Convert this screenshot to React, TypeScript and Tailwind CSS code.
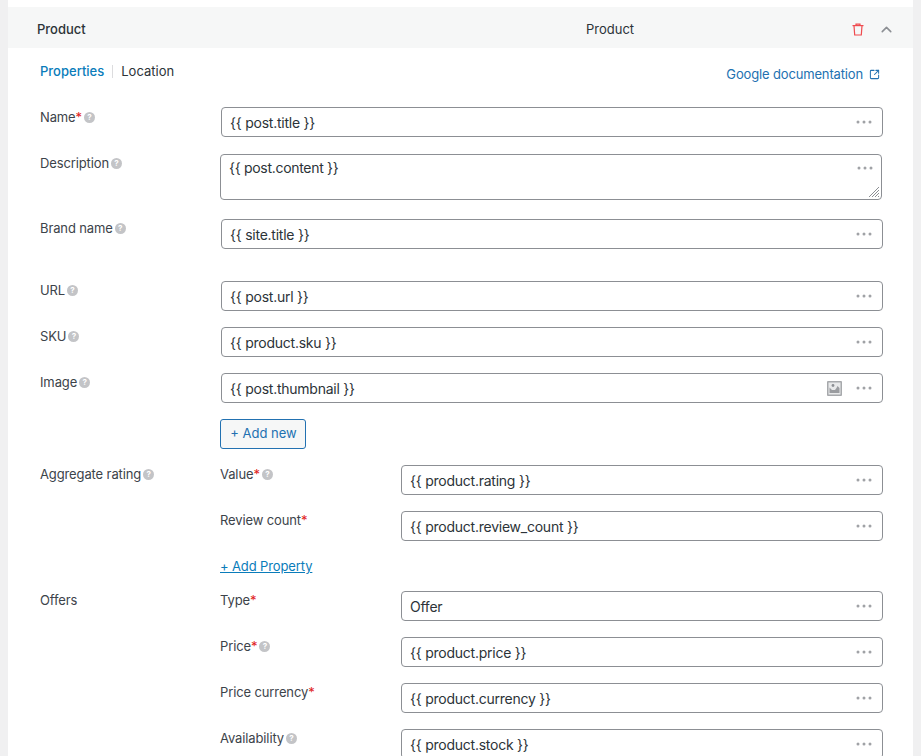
import { ChevronUp, SquareArrowOutUpRight } from 'lucide-react'

const fontStack = 'font-["Inter","Noto_Sans",sans-serif]'

function Help() {
  return (
    <span className="ml-[2px] inline-flex h-[11px] w-[11px] shrink-0 items-center justify-center rounded-full bg-[#c3c4c7] text-[8px] font-bold leading-none text-white">
      ?
    </span>
  )
}

function Label({ text, required, help }: { text: string; required?: boolean; help?: boolean }) {
  return (
    <div className="-mt-px flex items-center text-[13px] leading-[20px] tracking-[-0.12px] text-[#3c434a]">
      <span>{text}</span>
      {required && <span className="text-[#e02020]">*</span>}
      {help && <Help />}
    </div>
  )
}

function Dots() {
  return (
    <svg width="16" height="4" viewBox="0 0 16 4" className="shrink-0">
      <circle cx="2" cy="2" r="1.5" fill="#a0a2a6" />
      <circle cx="8" cy="2" r="1.5" fill="#a0a2a6" />
      <circle cx="14" cy="2" r="1.5" fill="#a0a2a6" />
    </svg>
  )
}

function ImageIcon() {
  return (
    <svg width="15" height="15" viewBox="0 0 15 15" className="mr-[14px] shrink-0">
      <rect width="15" height="15" rx="1" fill="#a7a9ac" />
      <rect x="1.5" y="1.5" width="12" height="12" fill="#e8e9ea" />
      <circle cx="6" cy="4.5" r="1.4" fill="#8c8f94" />
      <path d="M2.5 6.5l2.5 2.5h3l1.5-2 1-2 2 2v5h-10z" fill="#9a9ca0" />
    </svg>
  )
}

function TrashIcon() {
  return (
    <svg width="12" height="13" viewBox="0 0 12 13" fill="none" stroke="#ef4b4f" strokeWidth="1.2" className="shrink-0">
      <path d="M0.5 2.6h11" />
      <path d="M4 2.5V1.1h4v1.4" />
      <path d="M2 2.6l0.7 9.4h6.6L10 2.6" />
    </svg>
  )
}

function Field({ value, image }: { value: string; image?: boolean }) {
  return (
    <div className="ml-px flex h-[30px] items-center rounded-[4px] border border-[#8c8f94] bg-white pl-[8px] pr-[10px] text-[14px] tracking-[-0.24px] text-[#2c3338]">
      <span className="flex-1">{value}</span>
      {image && <ImageIcon />}
      <Dots />
    </div>
  )
}

function Row({ label, required, help, value, image, className }: { label: string; required?: boolean; help?: boolean; value: string; image?: boolean; className?: string }) {
  return (
    <div className={`flex ${className ?? ''}`}>
      <div className="w-[180px] shrink-0">
        <Label text={label} required={required} help={help} />
      </div>
      <div className="flex-1">
        <Field value={value} image={image} />
      </div>
    </div>
  )
}

export default function App() {
  return (
    <div className={`h-[756px] overflow-hidden bg-[#f0f0f1] px-2 ${fontStack}`}>
      <div className="h-full bg-white pt-[7px]">
        <div className="flex h-[41px] items-center bg-[#f6f7f7] pl-[29px] pr-[18px] pt-[4px] text-[13px] text-[#2c3338]">
          <span className="w-[250px] font-medium">Product</span>
          <span className="flex-1 pl-[299px]">Product</span>
          <TrashIcon />
          <ChevronUp size={17} strokeWidth={2.2} className="ml-[14px] text-[#8c8f94]" />
        </div>

        <div className="pl-[32px] pr-[30px]">
          <div className="flex items-start justify-between pt-[14px]">
            <div className="flex items-center text-[13px] leading-[18px]">
              <span className="font-medium text-[#0a7cba]">Properties</span>
              <span className="mx-2 h-[13px] w-px bg-[#dcdcde]" />
              <span className="text-[#2c3338]">Location</span>
            </div>
            <div className="mr-[3px] flex items-center pt-[3px] text-[13px] leading-[18px] tracking-[-0.15px] text-[#2271b1]">
              Google documentation
              <SquareArrowOutUpRight size={11} strokeWidth={2.2} className="ml-[6px]" />
            </div>
          </div>

          <div className="mt-[24px]">
            <Row label="Name" required help value="{{ post.title }}" className="[&>div:first-child]:pt-px" />

            <div className="mt-[17px] flex">
              <div className="w-[180px] shrink-0">
                <Label text="Description" help />
              </div>
              <div className="relative mr-px h-[46px] flex-1 rounded-[4px] border border-[#8c8f94] bg-white pl-[8px] pt-[4px] text-[14px] leading-[18px] tracking-[-0.3px] text-[#2c3338]">
                {'{{ post.content }}'}
                <div className="absolute right-[8px] top-[11px] flex">
                  <Dots />
                </div>
                <svg width="12" height="12" viewBox="0 0 12 12" className="absolute bottom-[1px] right-[1px]">
                  <path d="M1 11L11 1M4 11l7-7M7 11l4-4M10 11l1-1" stroke="#8c8f94" strokeWidth="1" />
                </svg>
              </div>
            </div>

            <Row label="Brand name" help value="{{ site.title }}" className="mt-[19px]" />
            <Row label="URL" help value="{{ post.url }}" className="mt-[32px]" />
            <Row label="SKU" help value="{{ product.sku }}" className="mt-4" />
            <Row label="Image" help value="{{ post.thumbnail }}" image className="mt-4" />

            <div className="mt-4 pl-[180px]">
              <button className="h-[30px] w-[86px] rounded-[3px] border border-[#2271b1] bg-[#f6f7f7] pl-px text-[13px] text-[#2271b1]">
                + Add new
              </button>
            </div>

            <div className="mt-4 flex">
              <div className="w-[180px] shrink-0">
                <Label text="Aggregate rating" help />
              </div>
              <div className="flex-1">
                <Row label="Value" required help value="{{ product.rating }}" />
                <Row label="Review count" required value="{{ product.review_count }}" className="mt-4" />
                <div className="mt-[16px] text-[13px] leading-[18px] tracking-[-0.12px] text-[#0a7cba] underline">+ Add Property</div>
              </div>
            </div>

            <div className="mt-4 flex">
              <div className="w-[180px] shrink-0">
                <Label text="Offers" />
              </div>
              <div className="flex-1">
                <Row label="Type" required value="Offer" />
                <Row label="Price" required help value="{{ product.price }}" className="mt-4" />
                <Row label="Price currency" required value="{{ product.currency }}" className="mt-4" />
                <Row label="Availability" help value="{{ product.stock }}" className="mt-4" />
              </div>
            </div>
          </div>
        </div>
      </div>
    </div>
  )
}
